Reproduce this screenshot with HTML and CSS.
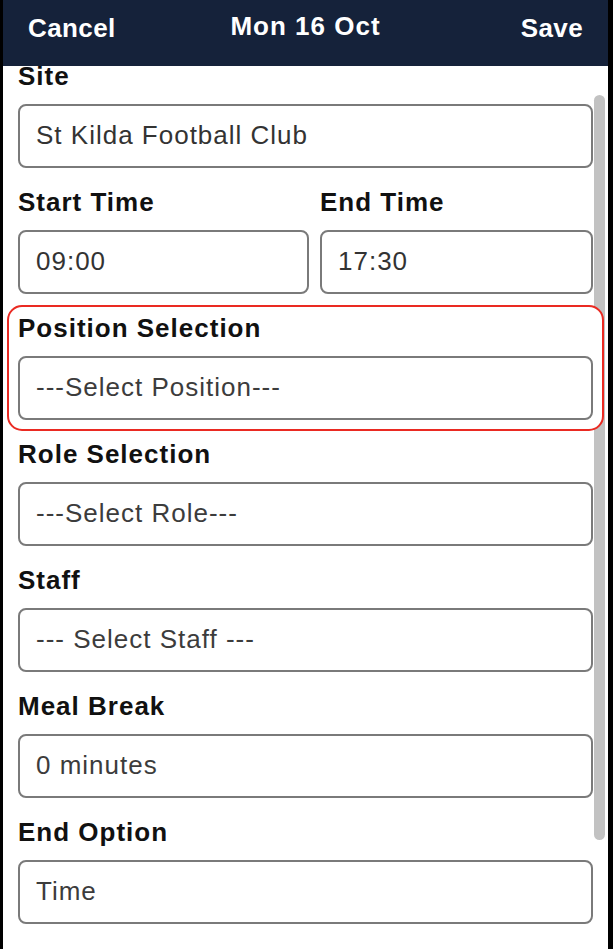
FILE: index.html
```html
<!DOCTYPE html>
<html lang="en">
<head>
    <meta charset="UTF-8">
    <meta name="viewport" content="width=device-width, initial-scale=1.0">
    <title>Edit Shift</title>
    <link rel="stylesheet" href="styles.css">
</head>
<body>
    <div class="screen">
        <!-- Barra do topo -->
        <header class="topbar">
            <span class="topbar-btn">Cancel</span>
            <span class="topbar-title">Mon 16 Oct</span>
            <span class="topbar-btn save">Save</span>
        </header>

        <form class="shift-form">
            <div class="field">
                <label>Site</label>
                <input class="box" type="text" value="St Kilda Football Club" readonly>
            </div>

            <div class="field-row">
                <div class="field">
                    <label>Start Time</label>
                    <input class="box" type="text" value="09:00" readonly>
                </div>
                <div class="field">
                    <label>End Time</label>
                    <input class="box" type="text" value="17:30" readonly>
                </div>
            </div>

            <!-- Campo destacado -->
            <div class="field highlight">
                <label>Position Selection</label>
                <select class="box">
                    <option>---Select Position---</option>
                </select>
            </div>

            <div class="field">
                <label>Role Selection</label>
                <select class="box">
                    <option>---Select Role---</option>
                </select>
            </div>

            <div class="field">
                <label>Staff</label>
                <select class="box">
                    <option>--- Select Staff ---</option>
                </select>
            </div>

            <div class="field">
                <label>Meal Break</label>
                <select class="box">
                    <option>0 minutes</option>
                </select>
            </div>

            <div class="field">
                <label>End Option</label>
                <select class="box">
                    <option>Time</option>
                </select>
            </div>
        </form>

        <div class="scrollbar"></div>
    </div>
</body>
</html>
```

FILE: styles.css
```css
body {
    margin: 0;
    background-color: #000;
    font-family: 'Liberation Sans', Arial, sans-serif;
    overflow: hidden;
}
.screen {
    position: relative;
    margin: 0 5px 0 3px;
    height: 949px;
    background-color: #fff;
    overflow: hidden;
}
.topbar {
    position: sticky;
    top: 0;
    z-index: 2;
    height: 66px;
    box-sizing: border-box;
    padding: 13px 25px 0 25px;
    background-color: #15223a;
    color: #fff;
    display: grid;
    grid-template-columns: 1fr auto 1fr;
    align-items: start;
    font-size: 26px;
    font-weight: bold;
    line-height: 30px;
    letter-spacing: 0.4px;
}
.topbar-title {
    margin-top: -2px;
    letter-spacing: 1px;
}
.topbar-btn.save {
    justify-self: end;
}
.shift-form {
    margin-top: -5px;
    padding: 0 15px;
    display: flex;
    flex-direction: column;
    gap: 19px;
}
.field {
    display: flex;
    flex-direction: column;
}
.field label {
    display: block;
    margin-bottom: 13px;
    font-size: 26px;
    font-weight: bold;
    line-height: 30px;
    letter-spacing: 1px;
    color: #111;
}
.field-row {
    display: grid;
    grid-template-columns: 291px 1fr;
    column-gap: 11px;
}
.box {
    box-sizing: border-box;
    width: 100%;
    height: 64px;
    margin: 0;
    padding: 0 0 2px 16px;
    border: 2px solid #7a7a7a;
    border-radius: 8px;
    background-color: #fff;
    font-family: 'Liberation Sans', Arial, sans-serif;
    font-size: 26px;
    letter-spacing: 1px;
    color: #333;
    outline: none;
    appearance: none;
    -webkit-appearance: none;
}
select.box {
    color: #3c3c3c;
}
/* Destaque em vermelho, por cima da barra de rolagem */
.highlight {
    z-index: 1;
    margin: -8px -11px -11px;
    padding: 6px 9px 9px;
    border: 2px solid #ea2a22;
    border-radius: 15px;
    background-color: #fff;
}
.scrollbar {
    position: absolute;
    top: 95px;
    left: 591px;
    width: 11px;
    height: 745px;
    border-radius: 6px;
    background-color: #c2c2c2;
}
```
